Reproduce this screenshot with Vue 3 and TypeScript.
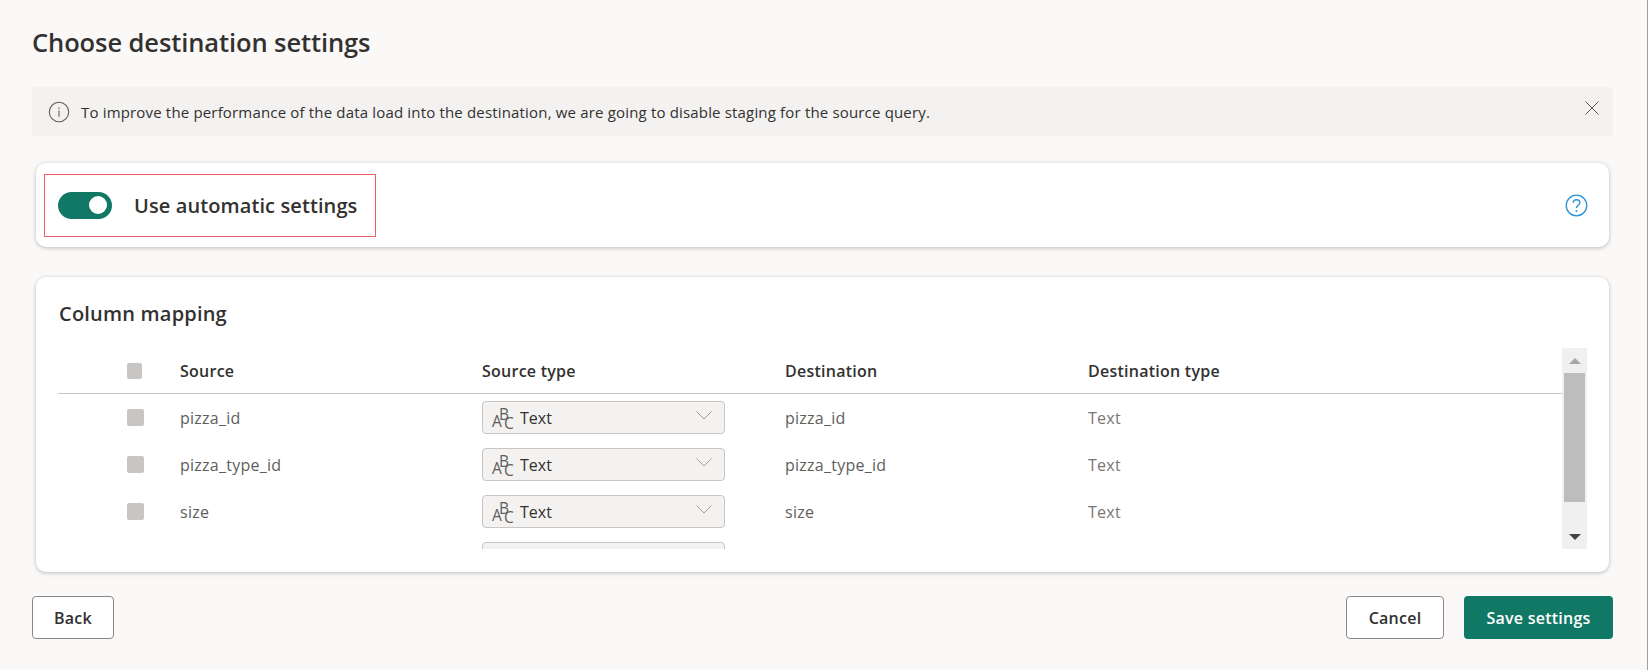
<script setup lang="ts">
interface Row {
  source: string
  type: string
  destination: string
  destinationType: string
}

// the last row only peeks out under the fold of the scroll area
const rows: Row[] = [
  { source: 'pizza_id', type: 'Text', destination: 'pizza_id', destinationType: 'Text' },
  { source: 'pizza_type_id', type: 'Text', destination: 'pizza_type_id', destinationType: 'Text' },
  { source: 'size', type: 'Text', destination: 'size', destinationType: 'Text' },
  { source: '', type: '', destination: '', destinationType: '' },
]
</script>

<template>
  <div class="page">
    <h1 class="title">Choose destination settings</h1>

    <div class="banner">
      <svg class="info" width="22" height="22" viewBox="0 0 22 22" fill="none">
        <circle cx="11" cy="11" r="9.7" stroke="#605e5c" stroke-width="1.1" />
        <path d="M11 9.6v6.2" stroke="#605e5c" stroke-width="1.1" />
        <circle cx="11" cy="7.2" r="0.8" fill="#605e5c" />
      </svg>
      <span class="banner-text">To improve the performance of the data load into the destination, we are going to disable staging for the source query.</span>
      <svg class="close" width="14" height="14" viewBox="0 0 14 14" fill="none">
        <path d="M0.5 0.5l13 13M13.500 0.5l-13 13" stroke="#323130" stroke-width="0.8" />
      </svg>
    </div>

    <section class="card auto">
      <div class="auto-box">
        <span class="toggle"><span class="knob"></span></span>
        <span class="auto-label">Use automatic settings</span>
      </div>
      <svg class="help" width="23" height="23" viewBox="0 0 23 23" fill="none">
        <circle cx="11.5" cy="11.5" r="10.3" stroke="#2b94d6" stroke-width="1.3" />
        <path d="M8.2 8.8c0-1.9 1.4-3.1 3.3-3.1s3.3 1.2 3.3 3c0 2.6-3.3 2.6-3.3 5.3" stroke="#2b94d6" stroke-width="1.4" />
        <circle cx="11.5" cy="17" r="1" fill="#2b94d6" />
      </svg>
    </section>

    <section class="card mapping">
      <h2 class="mapping-title">Column mapping</h2>
      <div class="table-wrap">
        <div class="table">
          <div class="row head">
            <span class="check-cell"><span class="check small"></span></span>
            <span>Source</span>
            <span>Source type</span>
            <span>Destination</span>
            <span>Destination type</span>
          </div>
          <div class="rows">
            <div v-for="(row, i) in rows" :key="i" class="row body">
              <span class="check-cell"><span class="check"></span></span>
              <span>{{ row.source }}</span>
              <span class="select">
                <template v-if="row.type">
                  <svg class="abc" width="20" height="24" viewBox="0 0 20 24" aria-hidden="true">
                    <text x="0" y="20.5">A</text>
                    <text x="7" y="13.5">B</text>
                    <text x="12" y="22.5">C</text>
                  </svg>
                  <span class="select-text">{{ row.type }}</span>
                  <svg class="chev" width="16" height="9" viewBox="0 0 16 9" fill="none">
                    <path d="M0.5 0.5L8 8l7.500-7.500" stroke="#a19f9d" stroke-width="1" />
                  </svg>
                </template>
              </span>
              <span>{{ row.destination }}</span>
              <span class="dest-type">{{ row.destinationType }}</span>
            </div>
          </div>
        </div>
        <div class="scrollbar">
          <span class="arrow up"></span>
          <span class="track"><span class="thumb"></span></span>
          <span class="arrow down"></span>
        </div>
      </div>
    </section>

    <footer class="footer">
      <button class="btn">Back</button>
      <span class="spacer"></span>
      <button class="btn cancel">Cancel</button>
      <button class="btn primary">Save settings</button>
    </footer>
  </div>
</template>

<style>
html,
body {
  margin: 0;
  background: #faf9f8;
}
</style>

<style scoped>
.page {
  box-sizing: border-box;
  width: 1648px;
  height: 670px;
  padding: 25px 34px 0 32px;
  border-right: 1px solid #a19f9d;
  background: #faf9f8;
  color: #323130;
  font-family: "Open Sans", "Noto Sans", sans-serif;
  overflow: hidden;
}

.title {
  margin: 0;
  font-size: 25.5px;
  line-height: 34px;
  font-weight: 600;
  letter-spacing: -0.1px;
}

.banner {
  display: flex;
  align-items: center;
  height: 49px;
  margin-top: 28px;
  padding: 0 14px 0 16px;
  border-radius: 4px;
  background: #f3f2f1;
}

.info {
  flex: none;
  margin-right: 11px;
}

.banner-text {
  flex: 1;
  font-size: 15px;
  letter-spacing: 0.17px;
}

.close {
  margin-bottom: 8px;
}

.card {
  box-sizing: border-box;
  margin: 0 4px;
  border-radius: 10px;
  background: #fff;
  box-shadow: 0 1px 4px rgba(0, 0, 0, 0.25);
}

.auto {
  display: flex;
  align-items: center;
  justify-content: space-between;
  height: 84px;
  margin-top: 27px;
  padding: 0 21px 0 8px;
}

.auto-box {
  display: flex;
  align-items: center;
  box-sizing: border-box;
  width: 332px;
  height: 63px;
  padding-left: 13px;
  border: 1px solid #ee5f68;
}

.toggle {
  display: flex;
  align-items: center;
  justify-content: flex-end;
  box-sizing: border-box;
  width: 54px;
  height: 27px;
  padding-right: 5px;
  border-radius: 14px;
  background: #117865;
}

.knob {
  width: 18px;
  height: 18px;
  border-radius: 50%;
  background: #fff;
}

.auto-label {
  margin-left: 22px;
  font-size: 20px;
  font-weight: 600;
  letter-spacing: 0.1px;
}

.mapping {
  height: 295px;
  margin-top: 30px;
  padding: 23px 22px 0;
}

.mapping-title {
  margin: 0 0 0 1px;
  font-size: 20px;
  line-height: 28px;
  font-weight: 600;
  letter-spacing: 0.2px;
}

.table-wrap {
  display: flex;
  height: 201px;
  margin-top: 20px;
}

.table {
  flex: 1;
  overflow: hidden;
}

.row {
  display: grid;
  grid-template-columns: 122px 302px 303px 303px 1fr;
  align-items: center;
  font-size: 16px;
  letter-spacing: 0.25px;
}

.head {
  height: 45px;
  border-bottom: 1px solid #c8c6c4;
  font-weight: 600;
}

.body {
  height: 47px;
  color: #605e5c;
}

.rows {
  height: 155px;
  overflow: hidden;
}

.check-cell {
  display: flex;
  padding-left: 69px;
}

.check {
  width: 17px;
  height: 17px;
  border-radius: 2px;
  background: #c8c6c4;
}

.check.small {
  width: 15px;
  height: 16px;
}

.select {
  display: flex;
  align-items: center;
  box-sizing: border-box;
  width: 243px;
  height: 33px;
  padding: 0 12px 0 9px;
  border: 1px solid #c8c6c4;
  border-radius: 4px;
  background: #f3f2f1;
  color: #323130;
}

.abc {
  flex: none;
  overflow: visible;
  font-size: 15.5px;
  letter-spacing: 0;
  fill: #605e5c;
}

.select-text {
  flex: 1;
  margin-left: 8px;
  padding-top: 1px;
  letter-spacing: 0;
}

.chev {
  margin-top: -5px;
}

.dest-type {
  color: #797775;
}

.scrollbar {
  display: flex;
  flex-direction: column;
  width: 25px;
  background: #f0f0f0;
}

.track {
  flex: 1;
  padding: 0 2px;
}

.thumb {
  display: block;
  height: 129px;
  background: #bdbdbd;
}

.arrow {
  height: 25px;
  display: flex;
  align-items: center;
  justify-content: center;
}

.arrow::before {
  content: "";
  border-left: 6px solid transparent;
  border-right: 6px solid transparent;
}

.up::before {
  border-bottom: 6px solid #a6a6a6;
}

.down::before {
  border-top: 6px solid #444;
}

.footer {
  display: flex;
  align-items: center;
  margin-top: 24px;
}

.spacer {
  flex: 1;
}

.btn {
  box-sizing: border-box;
  width: 82px;
  height: 43px;
  padding: 0;
  border: 1px solid #8a8886;
  border-radius: 4px;
  background: #fff;
  color: #323130;
  font-family: inherit;
  font-size: 16px;
  font-weight: 600;
  letter-spacing: 0.25px;
}

.cancel {
  width: 98px;
}

.primary {
  width: 149px;
  margin-left: 20px;
  border: 0;
  background: #117865;
  color: #fff;
}
</style>
